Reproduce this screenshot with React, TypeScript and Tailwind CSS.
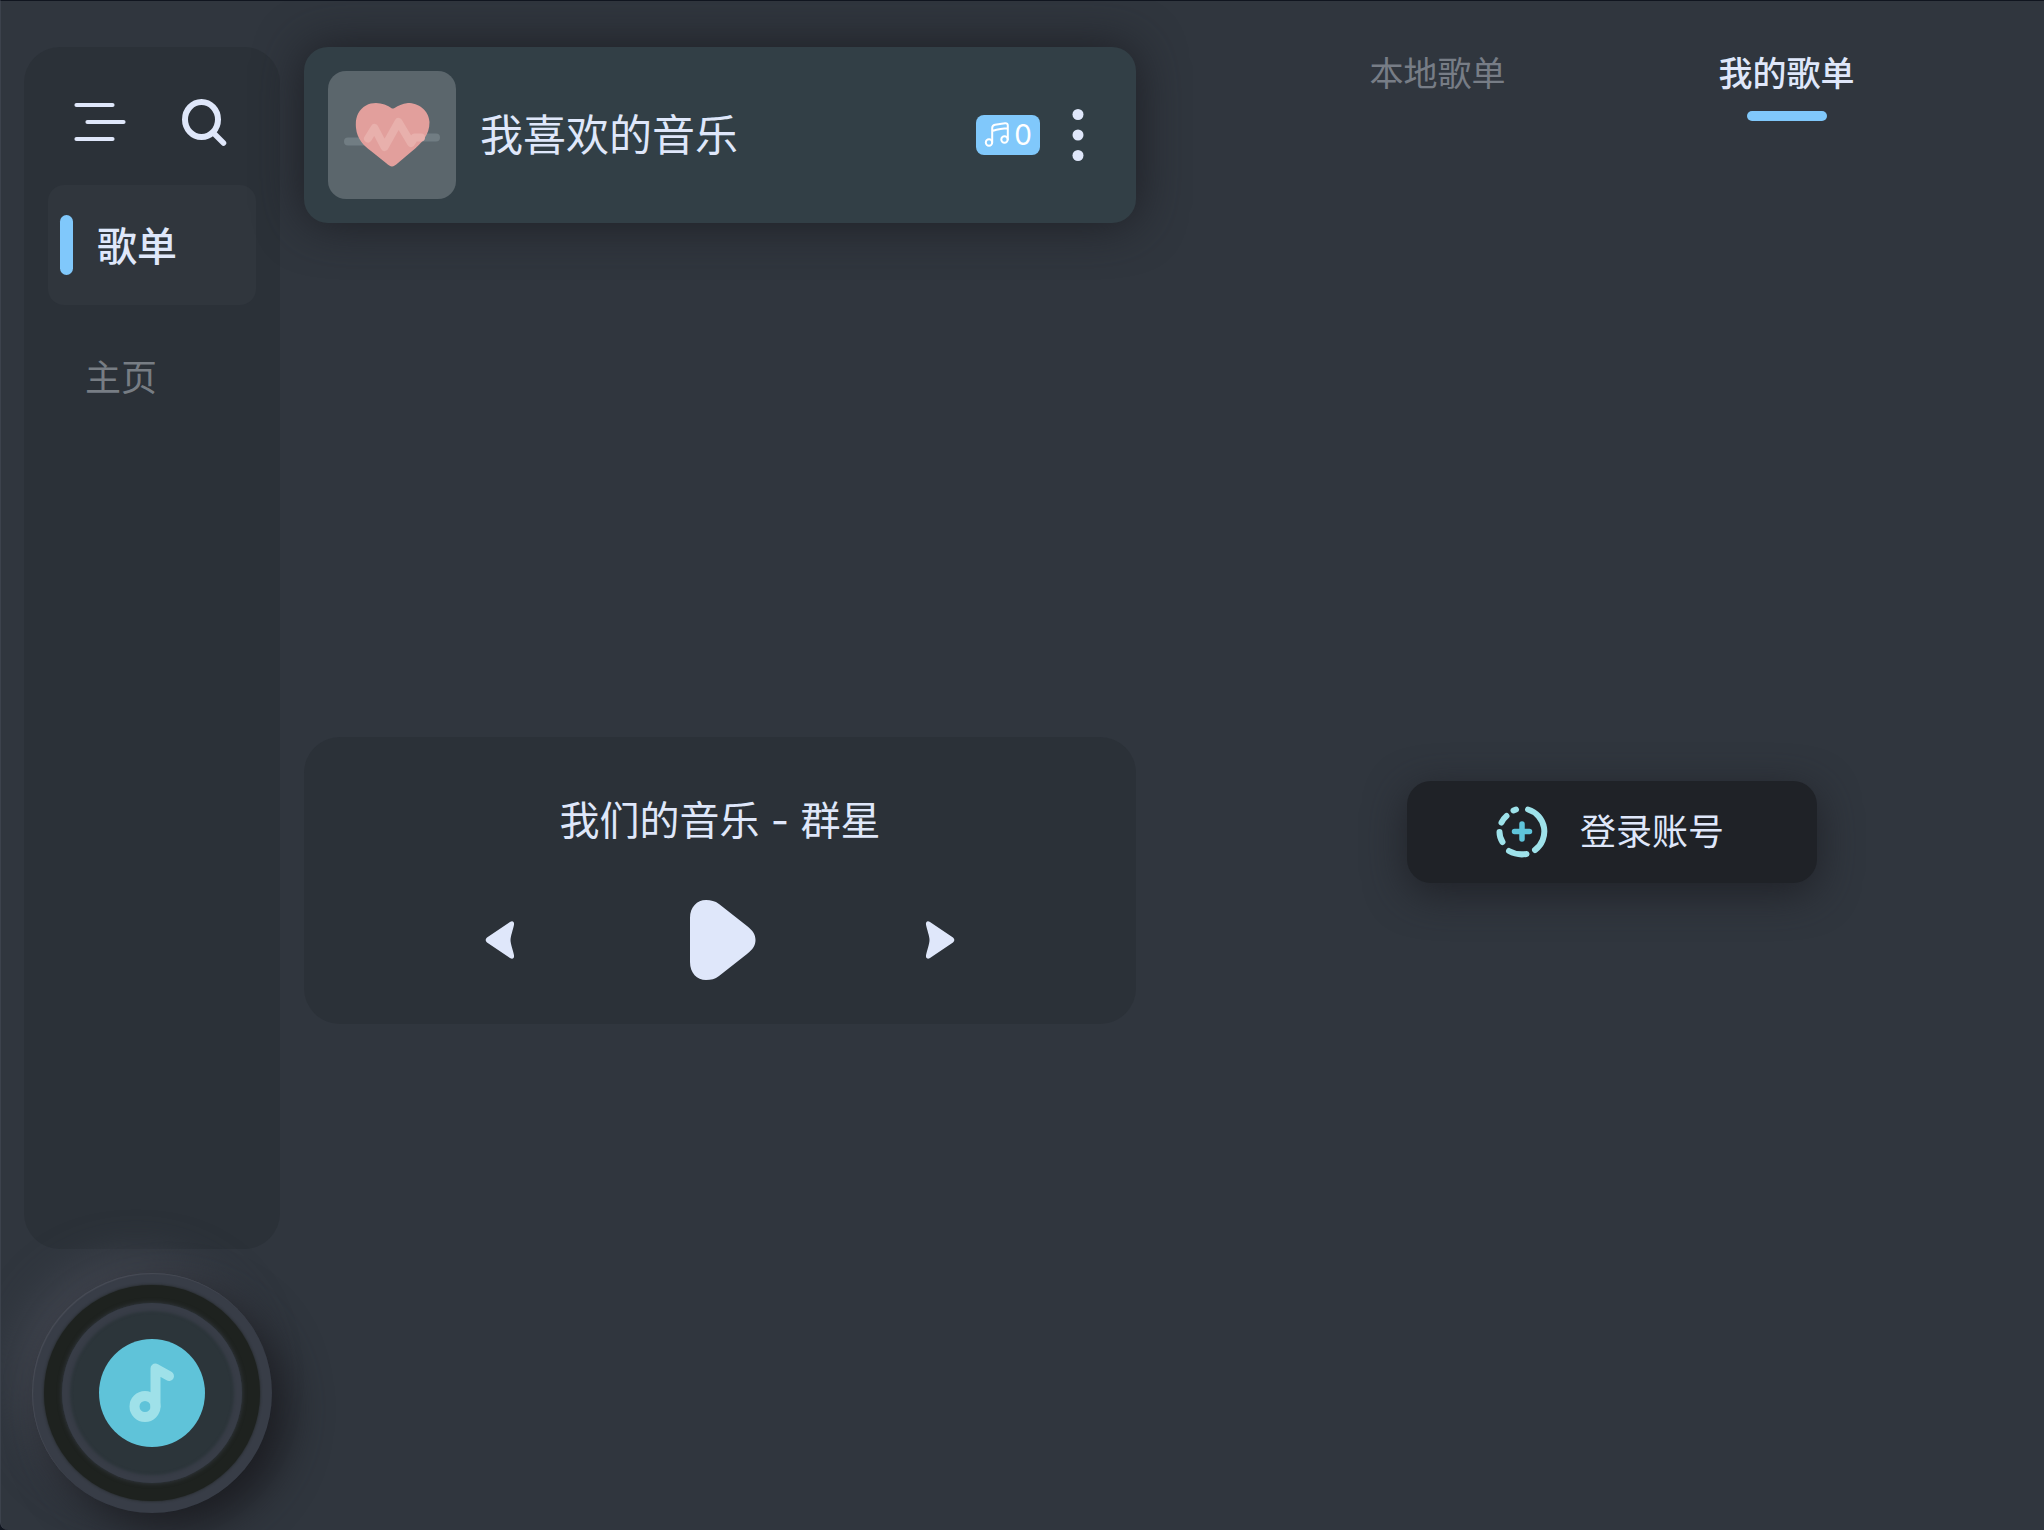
import React from "react";

const ink = "#dfe7fa";

function MenuIcon() {
  return (
    <svg width="52" height="40" viewBox="0 0 52 40" fill="none" stroke={ink} strokeWidth="4.2" strokeLinecap="round" aria-hidden="true">
      <path d="M2.500 3H38.500M13.500 20H49.500M2.500 37H38.500" />
    </svg>
  );
}

function SearchIcon() {
  return (
    <svg width="46" height="48" viewBox="0 0 46 48" fill="none" stroke={ink} strokeLinecap="round" aria-hidden="true">
      <ellipse cx="19.500" cy="21.500" rx="16.500" ry="17.500" strokeWidth="6" />
      <path d="M32.500 36L41.500 45" strokeWidth="5.500" />
    </svg>
  );
}

function HeartCover() {
  return (
    <svg width="96" height="66" viewBox="0 0 96 66" fill="none" aria-hidden="true">
      <path d="M4 39.500H22M70 35.500H92" stroke="#717d83" strokeWidth="8" strokeLinecap="round" />
      <path d="M48 6.500C41 1 30-1 22 3.500C14 8 11 16 12 26C13 37 20 44 27 49L42 61C47 65.500 49 65.500 54 61L67 50C78 41 85.500 33 85.500 20C85 8 74 1 64 1C58 1.500 54 4 51 5.700C49.500 6.500 49 6.500 48 6.500Z" fill="#e29f9c" />
      <path d="M24 36.500L30.500 26L40.500 45L54.500 20L67 41L70.500 35.500H77" stroke="#e8b0ac" strokeWidth="8" strokeLinecap="round" strokeLinejoin="round" />
    </svg>
  );
}

function NotesIcon() {
  return (
    <svg width="26" height="26" viewBox="0 0 26 26" fill="none" stroke="#ffffff" strokeWidth="2" strokeLinecap="round" strokeLinejoin="round" aria-hidden="true">
      <circle cx="5" cy="20.500" r="3.200" />
      <circle cx="20.500" cy="17.500" r="3.200" />
      <path d="M8.200 20V6C8.200 4 9.500 3 11 2.700L21 1.300C23 1 23.800 2 23.800 3.500V17.500M8.200 9C12 7.800 19 6.200 23.800 6.200" />
    </svg>
  );
}

function DotsIcon() {
  return (
    <svg width="12" height="52" viewBox="0 0 12 52" fill={ink} aria-hidden="true">
      <circle cx="6" cy="5.500" r="5.500" />
      <circle cx="6" cy="26" r="5.500" />
      <circle cx="6" cy="46.500" r="5.500" />
    </svg>
  );
}

function StepIcon({ flip = false }: { flip?: boolean }) {
  return (
    <svg width="30" height="40" viewBox="0 0 30 40" fill={ink} className={flip ? "rotate-180" : ""} aria-hidden="true">
      <path d="M2 17.500L25 2C27.500 0.500 29.500 1.700 29 4.700C28 10 25.500 16 25.500 20S28 30 29 35.300C29.500 38.300 27.500 39.500 25 38L2 22.500C0.200 21 0.200 19 2 17.500Z" />
    </svg>
  );
}

function PlayIcon() {
  return (
    <svg width="72" height="82" viewBox="0 0 72 82" fill={ink} aria-hidden="true">
      <path d="M6 19C6 8 13 1 22 1C27 1 31 2 35 5L63 27C69 31.500 71.500 36 71.500 41S69 50.500 63 55L35 77C31 80 27 81 22 81C13 81 6 74 6 63Z" />
    </svg>
  );
}

function LoginIcon() {
  return (
    <svg width="52" height="52" viewBox="0 0 52 52" fill="none" strokeWidth="6" strokeLinecap="round" aria-hidden="true">
      <g stroke="#9ee2ea">
        <path d="M32 3.500A23 23 0 0 1 39 44" />
        <path d="M30.500 48Q21 49.500 13 45" />
        <path d="M6.500 36Q3.500 31.500 3.500 26" />
        <path d="M5.500 16.500Q7.500 12.500 10.500 10" />
        <path d="M17.500 4.500L20 3.500" />
      </g>
      <path d="M26 18V33M18.500 25.500H33.500" stroke="#5fc4da" strokeWidth="5.500" />
    </svg>
  );
}

function NoteDisc() {
  return (
    <svg width="106" height="108" viewBox="0 0 106 108" fill="none" aria-hidden="true">
      <ellipse cx="53" cy="54" rx="53" ry="54" fill="#5fc3d9" />
      <circle cx="46" cy="67.500" r="10.500" stroke="#9fe1e9" strokeWidth="10" />
      <path d="M56.500 67.500V29.500L70 37" stroke="#9fe1e9" strokeWidth="10" strokeLinecap="round" strokeLinejoin="round" />
    </svg>
  );
}

export default function App() {
  return (
    <div className="bg-[#10151f]">
      <div className="flex min-h-screen gap-6 overflow-hidden rounded-bl-lg border-t border-l border-t-[#10151f] border-l-[#3c424c] bg-[#30363e] pl-[23px] font-[Inter,'Noto_Sans_CJK_SC',sans-serif] text-[#dfe7fa]">
        <aside className="flex w-64 shrink-0 flex-col items-center pt-[46px] pb-[17px]">
          <nav className="flex w-full flex-1 flex-col rounded-[36px] bg-[#2b3138] px-6 pt-[51px]">
            <div className="flex items-center justify-between pr-7 pl-[26px]">
              <button type="button" aria-label="菜单"><MenuIcon /></button>
              <button type="button" aria-label="搜索"><SearchIcon /></button>
            </div>
            <a href="#playlists" aria-current="page" className="mt-[39px] flex h-[120px] items-center gap-6 rounded-2xl bg-[#30363d] pl-3 text-[40px] font-medium">
              <span className="h-[60px] w-[13px] rounded-full bg-[#80c8fb]" />
              <span className="pt-1">歌单</span>
            </a>
            <a href="#home" className="flex h-[146px] items-center pl-[37px] text-4xl text-[#777d84]">主页</a>
          </nav>
          <button
            type="button"
            aria-label="正在播放"
            className="mt-6 flex size-60 items-center justify-center rounded-full bg-[#383d47] shadow-[16px_16px_40px_#1c1d22,-16px_-16px_40px_#41454f,inset_1px_1px_1px_#484c56]"
          >
            <span className="flex size-[216px] items-center justify-center rounded-full bg-[#1e221f] shadow-[0_0_3px_#1e221f]">
              <span className="flex size-[180px] items-center justify-center rounded-full bg-[#2c353a] shadow-[0_0_5px_#383d47,inset_0_0_3px_8px_#383d47]">
                <NoteDisc />
              </span>
            </span>
          </button>
        </aside>

        <main className="flex w-[832px] shrink-0 flex-col pt-[46px]">
          <section className="flex h-44 items-center rounded-3xl bg-[#323f46] pr-[52px] pl-6 shadow-[0_0_48px_#1d1e24]">
            <div className="flex size-32 items-center justify-center rounded-[18px] bg-[#5b666c]">
              <HeartCover />
            </div>
            <h2 className="ml-6 flex-1 text-[43px] leading-none">我喜欢的音乐</h2>
            <span className="flex h-10 items-center gap-1 rounded-lg bg-[#80c8fb] px-2 text-[28px] leading-none text-white">
              <NotesIcon />
              <span>0</span>
            </span>
            <button type="button" aria-label="更多" className="ml-8"><DotsIcon /></button>
          </section>

          <section className="mt-[514px] flex h-[287px] flex-col items-center rounded-[36px] bg-[#2b3138] pt-[54px]">
            <p className="text-[40px] leading-[60px]">我们的音乐 - 群星</p>
            <div className="mt-12 flex w-[470px] items-center justify-between">
              <button type="button" aria-label="上一首"><StepIcon /></button>
              <button type="button" aria-label="播放"><PlayIcon /></button>
              <button type="button" aria-label="下一首"><StepIcon flip /></button>
            </div>
          </section>
        </main>

        <section className="ml-5 flex flex-1 flex-col items-center pt-12">
          <div role="tablist" className="grid w-[698px] grid-cols-2 text-[34px] leading-[50px]">
            <button type="button" role="tab" aria-selected="false" className="flex flex-col items-center text-[#777d86]">
              本地歌单
            </button>
            <button type="button" role="tab" aria-selected="true" className="flex flex-col items-center gap-3 font-medium">
              我的歌单
              <span className="h-2.5 w-20 rounded-full bg-[#80c8fb]" />
            </button>
          </div>
          <button type="button" className="mt-[660px] flex h-[102px] w-[410px] items-center justify-center gap-8 rounded-3xl bg-[#1f2227] pr-1 text-4xl shadow-[0_10px_40px_#202228]">
            <LoginIcon />
            登录账号
          </button>
        </section>
      </div>
    </div>
  );
}
